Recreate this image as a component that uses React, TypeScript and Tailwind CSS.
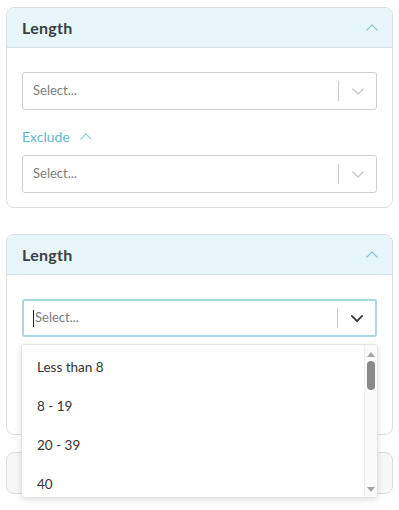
import React from 'react';

const font = { fontFamily: 'Lato, "Open Sans", sans-serif' };

const ChevronUp = ({ className }: { className?: string }) => (
    <svg viewBox="0 0 14 8" className={className} fill="none" stroke="currentColor" strokeWidth={1.4} strokeLinecap="round" strokeLinejoin="round">
        <path d="M1 7l6-6 6 6" />
    </svg>
);

const ChevronDown = ({ className, strokeWidth = 1.6 }: { className?: string; strokeWidth?: number }) => (
    <svg viewBox="0 0 14 8" className={className} fill="none" stroke="currentColor" strokeWidth={strokeWidth} strokeLinecap="round" strokeLinejoin="round">
        <path d="M1 1l6 6 6-6" />
    </svg>
);

const SelectBox = ({ focused }: { focused?: boolean }) => (
    <div
        className={
            'flex h-[38px] items-center rounded-[3px] bg-white ' +
            (focused ? 'border-2 border-[#a9d8df] pl-[9px]' : 'border border-[#cfcfcf] pl-[10px]')
        }
    >
        <div className="flex flex-1 items-center text-[13px] text-[#7d7d7d]">
            {focused && <span className="mr-[1px] h-[17px] w-px bg-[#222]" />}
            Select...
        </div>
        <div className="h-[20px] w-px bg-[#cccccc]" />
        <div className="flex w-[37px] justify-center">
            {focused ? (
                <ChevronDown className="h-[7px] w-[12px] text-[#333]" strokeWidth={2} />
            ) : (
                <ChevronDown className="h-[7px] w-[12px] text-[#c8c8c8]" />
            )}
        </div>
    </div>
);

const FilterCard = ({ focused }: { focused?: boolean }) => (
    <div className="overflow-hidden rounded-lg border border-[#dcdfe2] bg-white">
        <div className="flex h-[40px] items-center justify-between border-b border-[#cfe4e8] bg-[#e6f6f9] pl-[15px] pr-[14px]">
            <span className="text-[16px] font-bold tracking-[0.3px] text-[#3a3f44]">Length</span>
            <ChevronUp className="h-[7px] w-[12px] text-[#7fc3cb]" />
        </div>
        <div className="px-[15px] pb-[14px] pt-[24px]">
            <SelectBox focused={focused} />
            {/* exclude block sits under the open menu in the focused card */}
            <div className={focused ? 'invisible' : ''}>
                <div className="mt-[17px] flex h-[18px] items-center gap-[10px] text-[14px] text-[#63b9c5]">
                    Exclude
                    <ChevronUp className="h-[7px] w-[12px] text-[#8fcdd5]" />
                </div>
                <div className="mt-[10px]">
                    <SelectBox />
                </div>
            </div>
        </div>
    </div>
);

const options = ['Less than 8', '8 - 19', '20 - 39', '40'];

export default function App() {
    return (
        <div className="h-[510px] w-[399px] overflow-hidden bg-white px-[6px] pt-[7px]" style={font}>
            <FilterCard />
            <div className="relative mt-[26px]">
                <FilterCard focused />
                <div className="absolute left-[15px] right-[15px] top-[110px] z-10 flex h-[154px] rounded-[3px] border border-[#e3e6e9] bg-white shadow-[0_2px_6px_rgba(0,0,0,0.12)]">
                    <div className="flex-1 pt-[3px]">
                        {options.map((o) => (
                            <div key={o} className="flex h-[39px] items-center pl-[15px] text-[13.5px] text-[#333]">
                                {o}
                            </div>
                        ))}
                    </div>
                    <div className="flex w-[13px] flex-col items-center border-l border-[#f0f0f0] bg-[#fafafa] pt-[7px]">
                        <div className="h-0 w-0 border-x-[4px] border-b-[5px] border-x-transparent border-b-[#a3a3a3]" />
                        <div className="mt-[4px] h-[29px] w-[8px] rounded-full bg-[#8a8a8a]" />
                        <div className="flex-1" />
                        <div className="mb-[5px] h-0 w-0 border-x-[4px] border-t-[5px] border-x-transparent border-t-[#a3a3a3]" />
                    </div>
                </div>
            </div>
            <div className="mt-[17px] h-[42px] rounded-lg border border-[#dcdfe2] bg-[#f5f7f8]" />
        </div>
    );
}
